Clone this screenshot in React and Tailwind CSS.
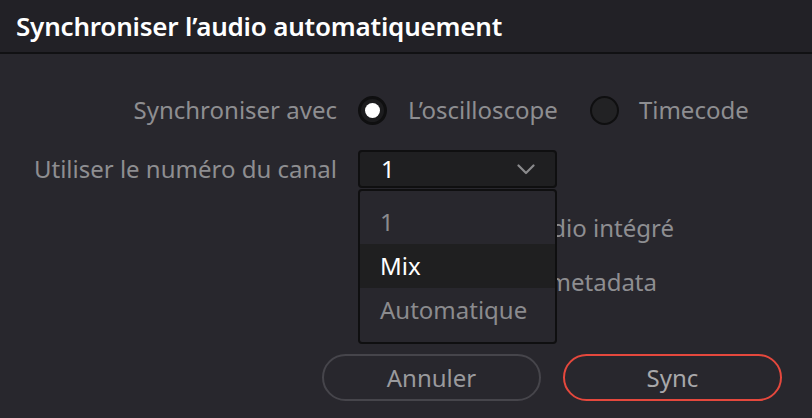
import React from "react";

function Radio({ checked }) {
  return checked ? (
    <div className="w-[29px] h-[29px] rounded-full border-[3px] border-[#0f0f10] bg-[#1c1c1e] flex items-center justify-center shrink-0">
      <div className="w-[15px] h-[15px] rounded-full bg-white" />
    </div>
  ) : (
    <div className="w-[29px] h-[29px] rounded-full border-2 border-[#0f0f10] bg-[#222224] shrink-0" />
  );
}

function Checkbox() {
  return <div className="w-[22px] h-[22px] rounded-[3px] border-2 border-[#0f0f10] bg-[#222224] shrink-0" />;
}

export default function App() {
  return (
    <div className="w-[812px] h-[418px] bg-[#28272d] font-['Noto_Sans',sans-serif] relative overflow-hidden">
      <div className="h-[54px] bg-[#222126] border-b-2 border-[#111113] flex items-center pl-[16px]">
        <span className="text-white text-[26px] font-semibold tracking-[-0.2px] leading-none">
          Synchroniser l’audio automatiquement
        </span>
      </div>

      <div className="flex flex-col pt-[41px]">
        <div className="flex items-center h-[30px]">
          <div className="w-[337px] text-right text-[24px] text-[#8e8e91] whitespace-nowrap">Synchroniser avec</div>
          <div className="flex items-center ml-[21px]">
            <Radio checked />
            <span className="ml-[21px] text-[24px] text-[#8e8e91]">L’oscilloscope</span>
            <div className="ml-[32px]">
              <Radio />
            </div>
            <span className="ml-[20px] text-[24px] text-[#8e8e91]">Timecode</span>
          </div>
        </div>

        <div className="flex items-center h-[38px] mt-[25px]">
          <div className="w-[337px] text-right text-[24px] text-[#8e8e91] whitespace-nowrap">Utiliser le numéro du canal</div>
          <div className="ml-[21px] w-[199px] h-[38px] rounded-[4px] border-2 border-[#0f0f10] bg-[#1f1f21] flex items-center justify-between pl-[21px] pr-[20px]">
            <span className="text-[24px] text-white">1</span>
            <svg width="18" height="11" viewBox="0 0 18 11" fill="none">
              <path d="M1.5 1.5 L9 9 L16.5 1.5" stroke="#8a8a8c" strokeWidth="2.2" strokeLinecap="round" strokeLinejoin="round" />
            </svg>
          </div>
        </div>

        <div className="flex items-center h-[30px] mt-[25px]">
          <div className="w-[337px]" />
          <div className="ml-[22px] w-[315px] flex items-center justify-between">
            <Checkbox />
            <span className="text-[24px] text-[#8e8e91] whitespace-nowrap">Conserver l’audio intégré</span>
          </div>
        </div>

        <div className="flex items-center h-[30px] mt-[24px]">
          <div className="w-[337px]" />
          <div className="ml-[22px] w-[298px] flex items-center justify-between">
            <Checkbox />
            <span className="text-[24px] text-[#8e8e91] whitespace-nowrap">Ajouter les metadata</span>
          </div>
        </div>

        <div className="flex justify-end gap-[22px] pr-[30px] mt-[57px]">
          <button className="w-[219px] h-[47px] rounded-full border-2 border-[#46454b] text-[24px] text-[#9a9a9d] flex items-center justify-center">
            Annuler
          </button>
          <button className="w-[219px] h-[47px] rounded-full border-2 border-[#e5483d] text-[24px] text-[#a8a8aa] flex items-center justify-center">
            Sync
          </button>
        </div>
      </div>

      <div className="absolute left-[358px] top-[189px] w-[199px] h-[155px] rounded-[4px] border-2 border-[#0f0f10] bg-[#28272d] flex flex-col pt-[9px]">
        <div className="h-[44px] flex items-center pl-[20px] text-[24px] text-[#8b8b8e]">1</div>
        <div className="h-[44px] flex items-center pl-[20px] text-[24px] text-white bg-[#1f1f20]">Mix</div>
        <div className="h-[44px] flex items-center pl-[20px] text-[24px] text-[#8b8b8e]">Automatique</div>
      </div>
    </div>
  );
}
